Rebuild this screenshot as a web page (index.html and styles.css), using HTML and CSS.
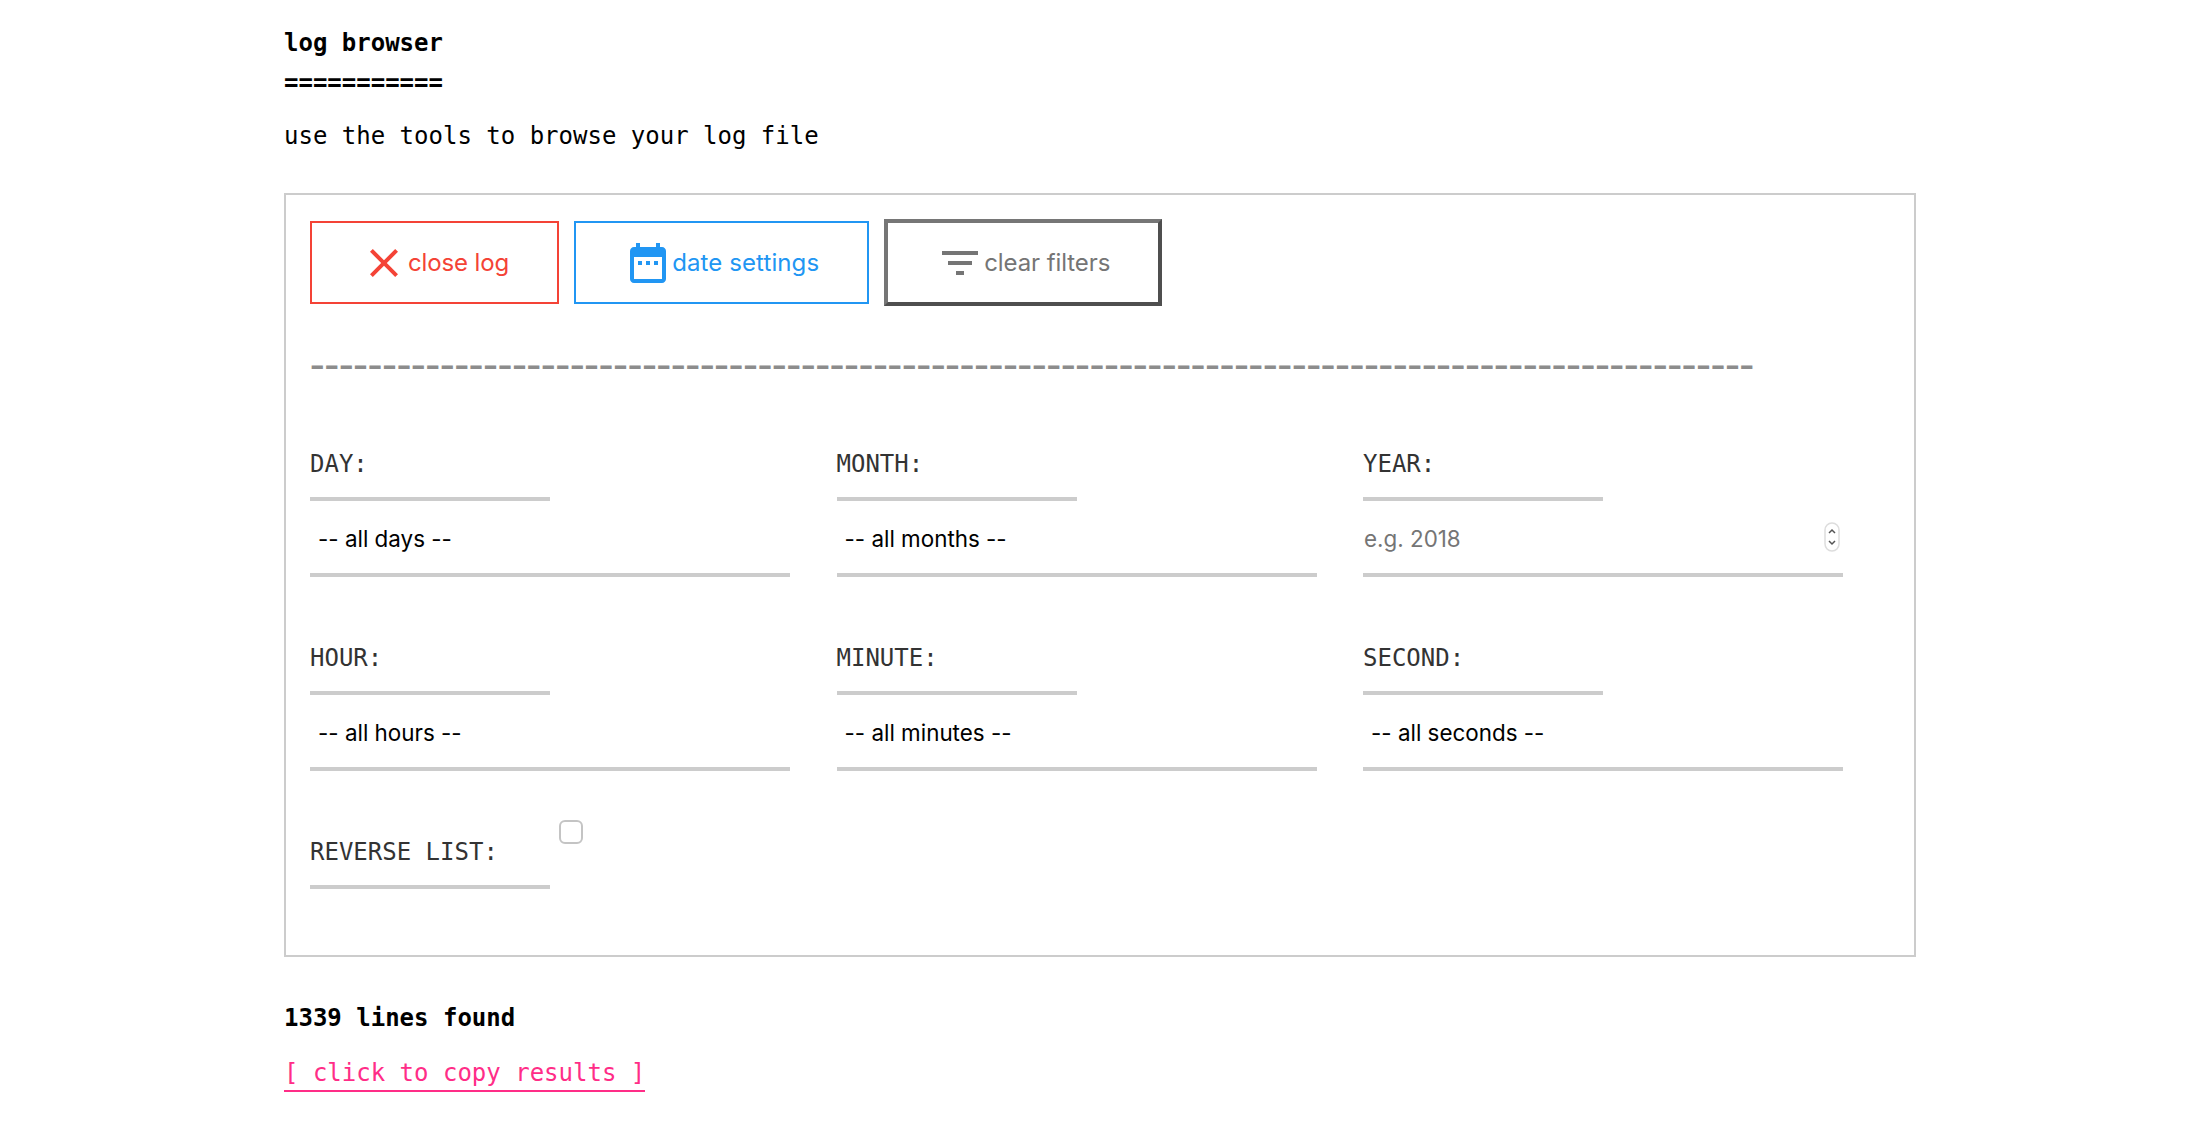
FILE: index.html
```html
<!DOCTYPE html>
<html lang="en">
<head>
<meta charset="utf-8">
<title>log browser</title>
<link rel="stylesheet" href="styles.css">
</head>
<body>
<main class="page">
  <h1 class="title">log browser</h1>
  <div class="rule">===========</div>
  <p class="intro">use the tools to browse your log file</p>
  <section class="panel">
    <div class="actions">
      <button class="btn btn-red" type="button">
        <svg class="icon" viewBox="0 0 24 24"><path d="M19 6.41L17.59 5 12 10.59 6.41 5 5 6.41 10.59 12 5 17.59 6.41 19 12 13.41 17.59 19 19 17.59 13.41 12z"/></svg>close log
      </button>
      <button class="btn btn-blue" type="button">
        <svg class="icon" viewBox="0 0 24 24"><path d="M9 11H7v2h2v-2zm4 0h-2v2h2v-2zm4 0h-2v2h2v-2zm2-7h-1V2h-2v2H8V2H6v2H5c-1.11 0-1.99.9-1.99 2L3 20c0 1.1.89 2 2 2h14c1.1 0 2-.9 2-2V6c0-1.1-.9-2-2-2zm0 16H5V9h14v11z"/></svg>date settings
      </button>
      <button class="btn btn-grey" type="button">
        <svg class="icon" viewBox="0 0 24 24"><path d="M10 18h4v-2h-4v2zM3 6v2h18V6H3zm3 7h12v-2H6v2z"/></svg>clear filters
      </button>
    </div>
    <div class="dashes">----------------------------------------------------------------------------------------------------</div>
    <div class="fields">
      <div class="field">
        <label class="field-label">DAY:</label>
        <select class="control"><option>-- all days --</option></select>
      </div>
      <div class="field">
        <label class="field-label">MONTH:</label>
        <select class="control"><option>-- all months --</option></select>
      </div>
      <div class="field">
        <label class="field-label">YEAR:</label>
        <div class="number-wrap">
          <input class="control control-input" type="text" placeholder="e.g. 2018">
          <svg class="spinner" viewBox="0 0 16 30">
            <rect class="spinner-pill" x="1" y="1" width="14" height="28" rx="7"/>
            <path class="spinner-arrow" d="M5 11l3-3 3 3M5 19l3 3 3-3"/>
          </svg>
        </div>
      </div>
      <div class="field">
        <label class="field-label">HOUR:</label>
        <select class="control"><option>-- all hours --</option></select>
      </div>
      <div class="field">
        <label class="field-label">MINUTE:</label>
        <select class="control"><option>-- all minutes --</option></select>
      </div>
      <div class="field">
        <label class="field-label">SECOND:</label>
        <select class="control"><option>-- all seconds --</option></select>
      </div>
      <div class="check-field">
        <label class="field-label" for="reverse">REVERSE LIST:</label>
        <input class="check" id="reverse" type="checkbox">
      </div>
    </div>
  </section>
  <p class="count">1339 lines found</p>
  <a class="copy" href="#">[ click to copy results ]</a>
</main>
</body>
</html>
```
FILE: styles.css
```css
* { box-sizing: border-box; }
html, body { margin: 0; background: #fff; }
body {
  font-family: "DejaVu Sans Mono", "Liberation Mono", monospace;
  font-size: 24px;
  line-height: 40px;
  color: #000;
}
.page {
  width: 1632px;
  margin-left: 284px;
  padding-top: 23px;
}
.title { margin: 0; font-size: 24px; line-height: 40px; font-weight: 700; }
.rule { font-weight: 700; }
.intro { margin: 13px 0 37px; }
.panel {
  border: 2px solid #ccc;
  padding: 24px 24px 66px;
}
.actions { display: flex; align-items: center; gap: 15px; }
.btn {
  display: flex;
  align-items: center;
  height: 83px;
  padding: 0 48px;
  background: #fff;
  font-family: Inter, "Noto Sans", sans-serif;
  font-size: 24px;
  line-height: 48px;
}
.icon { width: 48px; height: 48px; fill: currentColor; flex: none; }
.btn-red { border: 2px solid #f44336; color: #f44336; letter-spacing: -0.12px; }
.btn-blue { border: 2px solid #2196f3; color: #2196f3; letter-spacing: 0.1px; }
.btn-grey {
  height: 87px;
  border: 4px solid;
  border-color: #767676 #4f4f4f #4f4f4f #767676;
  color: #757575;
  letter-spacing: -0.08px;
}
.dashes {
  margin: 38px 0 0 -6px;
  height: 40px;
  font-size: 44px;
  line-height: 40px;
  letter-spacing: -12.05px;
  white-space: nowrap;
  color: #8c8c8c;
}
.fields {
  display: grid;
  grid-template-columns: repeat(3, 480px);
  column-gap: 46.5px;
  row-gap: 61px;
  margin-top: 60px;
}
.field { display: flex; flex-direction: column; }
.field-label {
  display: block;
  width: 240px;
  flex: none;
  padding-bottom: 13px;
  border-bottom: 4px solid #ccc;
  color: #333;
}
.control {
  display: block;
  width: 480px;
  height: 76px;
  margin: 0;
  padding: 2px 8px 0;
  border: 0;
  border-bottom: 4px solid #ccc;
  border-radius: 0;
  appearance: none;
  background: transparent;
  font-family: Inter, "Noto Sans", sans-serif;
  font-size: 22.4px;
  color: #000;
  outline: 0;
}
.control-input { padding: 2px 1px 0; }
.control-input::placeholder { color: #757575; opacity: 1; }
.number-wrap { position: relative; }
.spinner { position: absolute; top: 21px; right: 3px; width: 16px; height: 30px; }
.spinner-pill { fill: #fff; stroke: #ddd; stroke-width: 1.5; }
.spinner-arrow { fill: none; stroke: #555; stroke-width: 1.5; }
.check-field { grid-column: 1 / -1; display: flex; align-items: flex-start; }
.check {
  appearance: none;
  width: 24px;
  height: 24px;
  margin: -12px 0 0 9px;
  border: 2px solid #c4c4c4;
  border-radius: 6px;
  background: #fff;
}
.count { margin: 41px 0 15px; font-weight: 700; }
.copy {
  display: inline-block;
  color: #ff2d87;
  line-height: 33px;
  text-decoration: none;
  border-bottom: 2px solid #ff2d87;
}
```
